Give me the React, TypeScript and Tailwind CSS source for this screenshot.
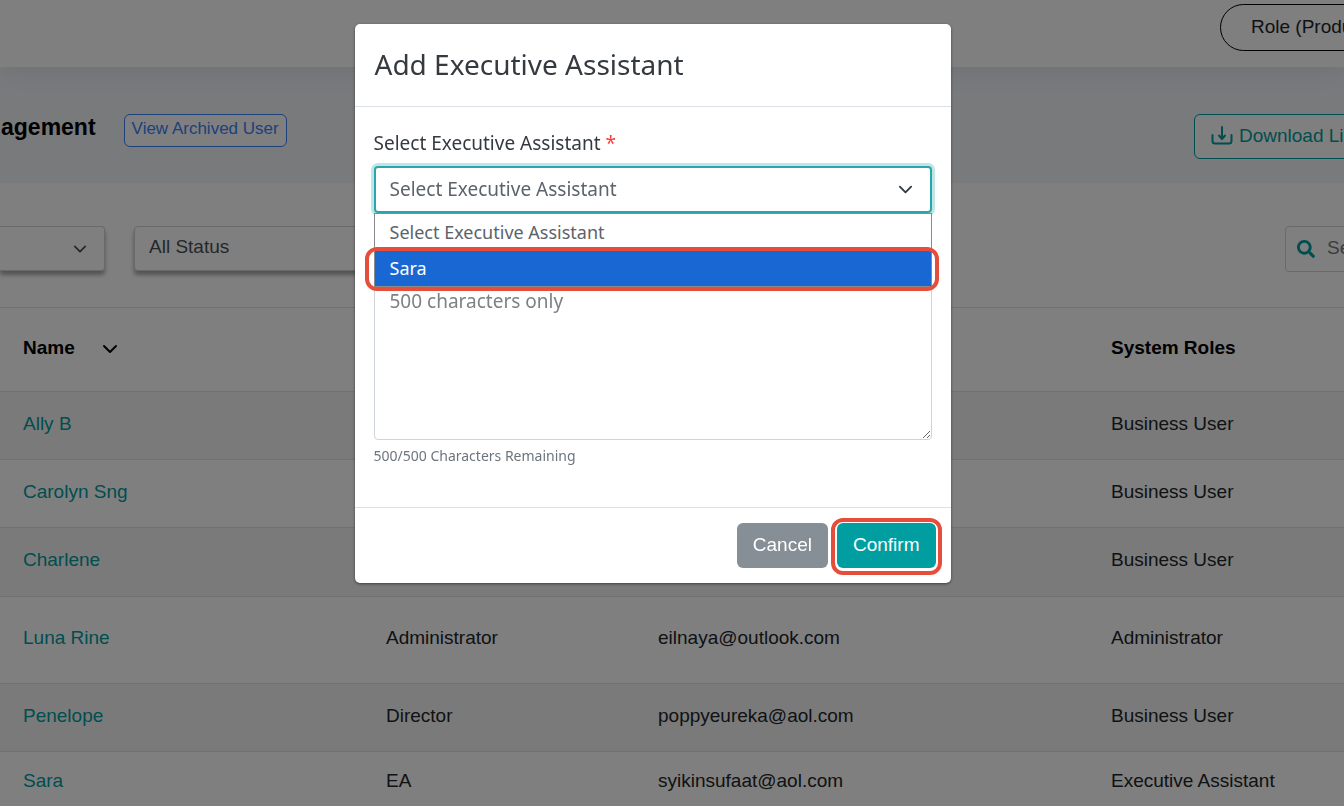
import { FaSearch } from "react-icons/fa";

const users = [
  { name: "Ally B", designation: "", email: "", role: "Business User", height: "h-[68px]" },
  { name: "Carolyn Sng", designation: "", email: "", role: "Business User", height: "h-[68px]" },
  { name: "Charlene", designation: "", email: "", role: "Business User", height: "h-[69px]" },
  { name: "Luna Rine", designation: "Administrator", email: "eilnaya@outlook.com", role: "Administrator", height: "h-[87px]" },
  { name: "Penelope", designation: "Director", email: "poppyeureka@aol.com", role: "Business User", height: "h-[68px]" },
  { name: "Sara", designation: "EA", email: "syikinsufaat@aol.com", role: "Executive Assistant", height: "h-[62px]" },
];

function Chevron({ className }: { className: string }) {
  return (
    <svg className={className} viewBox="0 0 16 16" fill="none" stroke="currentColor" strokeWidth="2" strokeLinecap="round" strokeLinejoin="round" aria-hidden="true">
      <path d="m2 5 6 6 6-6" />
    </svg>
  );
}

function DownloadIcon() {
  return (
    <svg className="h-5 w-[22px] shrink-0" viewBox="0 0 22 20" fill="none" stroke="currentColor" strokeWidth="2" strokeLinecap="round" strokeLinejoin="round" aria-hidden="true">
      <path d="M11 1v11M8 9.500l3 3.500 3-3.500M1.500 9v6a2.500 2.500 0 0 0 2.500 2.500h14a2.500 2.500 0 0 0 2.500-2.500V9" />
    </svg>
  );
}

function UserManagement() {
  return (
    <div className="font-['Liberation_Sans',Arial,sans-serif] text-[#212529]">
      <header className="relative flex h-[67px] justify-end bg-white pt-1 shadow-[0_4px_24px_rgba(0,0,0,0.08)]">
        <button type="button" className="-mr-[96px] h-[47px] w-[220px] shrink-0 rounded-full border border-black pl-[30px] text-left text-[19px] whitespace-nowrap">
          Role (Product)
        </button>
      </header>

      <div className="flex h-[116px] items-start justify-between bg-[#f1f4f9] pt-[47px]">
        <div className="flex items-start gap-7">
          <h1 className="pl-px text-[23px] leading-[26px] font-bold text-black">agement</h1>
          <a href="#" className="flex h-[33px] items-center rounded-md border border-[#3b82f6] bg-white px-[7px] pb-1 text-[17px] whitespace-nowrap text-[#3b82f6]">
            View Archived User
          </a>
        </div>
        <button type="button" className="-mr-[40px] flex h-[45px] w-[190px] shrink-0 items-center gap-[6px] rounded-md border border-[#009c9f] bg-white pb-px pl-4 text-[19px] whitespace-nowrap text-[#009c9f]">
          <DownloadIcon />
          Download List
        </button>
      </div>

      <div className="flex h-[124px] items-start justify-between pt-[43px]">
        <div className="flex gap-[29px]">
          <div className="relative text-[#495057]">
            <select aria-label="Role filter" className="h-[45px] w-[105px] appearance-none rounded-r border border-l-0 border-[#ced4da] bg-white shadow-[0_4px_4px_rgba(0,0,0,0.35)]" />
            <Chevron className="pointer-events-none absolute top-4 right-[18px] size-[14px]" />
          </div>
          <select aria-label="Status" className="h-[45px] w-[260px] appearance-none rounded border border-[#ced4da] bg-white px-[14px] pb-[2px] text-[19px] text-[#495057] shadow-[0_4px_4px_rgba(0,0,0,0.35)]">
            <option>All Status</option>
          </select>
        </div>
        <label className="-mr-[180px] flex h-[46px] w-[239px] shrink-0 items-center gap-3 rounded border border-[#ced4da] bg-white pb-px pl-[11px]">
          <FaSearch className="size-[18px] shrink-0 text-[#009c9f]" aria-hidden="true" />
          <input type="search" aria-label="Search" placeholder="Search" className="w-[160px] text-[19px] outline-none placeholder:text-[#7a7a80]" />
        </label>
      </div>

      <table className="w-full table-fixed border-collapse text-left text-[19px]">
        <colgroup>
          <col className="w-[363px]" />
          <col className="w-[272px]" />
          <col className="w-[453px]" />
          <col />
        </colgroup>
        <thead>
          <tr className="h-[84px] border-y border-[#dee2e6] text-black">
            <th scope="col" className="pb-[2px] pl-[23px]">
              <button type="button" className="flex items-center gap-[27px]">
                Name
                <Chevron className="size-4" />
              </button>
            </th>
            <th />
            <th />
            <th scope="col" className="pb-[2px] pl-[23px] whitespace-nowrap">System Roles</th>
          </tr>
        </thead>
        <tbody>
          {users.map((user) => (
            <tr key={user.name} className={`border-b border-[#dee2e6] odd:bg-[#f5f5f5] ${user.height}`}>
              <td className="pb-[3px] pl-[23px]">
                <a href="#" className="text-[#009c9f]">{user.name}</a>
              </td>
              <td className="pb-[3px] pl-[23px]">{user.designation}</td>
              <td className="pb-[3px] pl-[23px]">{user.email}</td>
              <td className="pb-[3px] pl-[23px] whitespace-nowrap">{user.role}</td>
            </tr>
          ))}
        </tbody>
      </table>
    </div>
  );
}

function AddAssistantDialog() {
  return (
    <div className="fixed inset-0 flex items-start justify-center bg-black/50 pt-6 pr-[39px]">
      <div role="dialog" aria-modal="true" aria-labelledby="dialog-title" className="w-full max-w-[596px] rounded-[5px] bg-white font-['Noto_Sans','Open_Sans',sans-serif] text-[#343a40] shadow-[0_1px_3px_rgba(0,0,0,0.5)]">
        <div className="border-b border-[#dde0e6] px-5 pt-5 pb-[22px]">
          <h2 id="dialog-title" className="text-[28px] leading-10">Add Executive Assistant</h2>
        </div>

        <div className="px-[19px] pt-[22px] pb-[41px] text-[19px]">
          <label htmlFor="assistant" className="block leading-7">
            Select Executive Assistant <span className="text-[#ff3b3b]">*</span>
          </label>
          <div className="relative mt-[9px]">
            <select id="assistant" className="block h-[47px] w-full appearance-none rounded border-2 border-[#2aa5a8] bg-white px-[14px] text-[#5c636a] ring-3 ring-[#bfe6e7] outline-none">
              <option>Select Executive Assistant</option>
              <option>Sara</option>
            </select>
            <Chevron className="pointer-events-none absolute top-4 right-[19px] size-[15px]" />
            <ul role="listbox" aria-label="Select Executive Assistant" className="absolute inset-x-0 top-full z-10 border border-[#8a8a8a] bg-white text-lg leading-9">
              <li role="option" aria-selected="false" className="px-[15px] text-[#5c636a]">Select Executive Assistant</li>
              <li role="option" aria-selected="true" className="relative bg-[#1967d2] px-[15px] text-white">
                Sara
                <span className="absolute -top-[3px] -right-2 -bottom-[5px] -left-[10px] rounded-xl border-4 border-[#e64e3c]" />
              </li>
            </ul>
          </div>
          <textarea
            aria-label="Remarks"
            placeholder="500 characters only"
            className="mt-16 block h-[163px] w-full resize-y rounded border border-[#ced4da] px-[15px] pt-[9px] leading-7 outline-none placeholder:text-[#7d8185]"
          />
          <p className="mt-[6px] text-sm leading-5 text-[#6c757d]">500/500 Characters Remaining</p>
        </div>

        <div className="flex justify-end gap-[9px] border-t border-[#dde0e6] px-[15px] py-[15px] font-['Liberation_Sans',Arial,sans-serif] text-[19px] text-white">
          <button type="button" className="h-[45px] rounded-md bg-[#868e96] px-4">Cancel</button>
          <div className="relative">
            <button type="button" className="h-[45px] rounded-md bg-[#009ea0] px-4">Confirm</button>
            <span className="pointer-events-none absolute -inset-x-[6px] -top-[5px] -bottom-[7px] rounded-xl border-4 border-[#e64e3c]" />
          </div>
        </div>
      </div>
    </div>
  );
}

export default function App() {
  return (
    <main className="relative h-screen overflow-hidden bg-white">
      <UserManagement />
      <AddAssistantDialog />
    </main>
  );
}
